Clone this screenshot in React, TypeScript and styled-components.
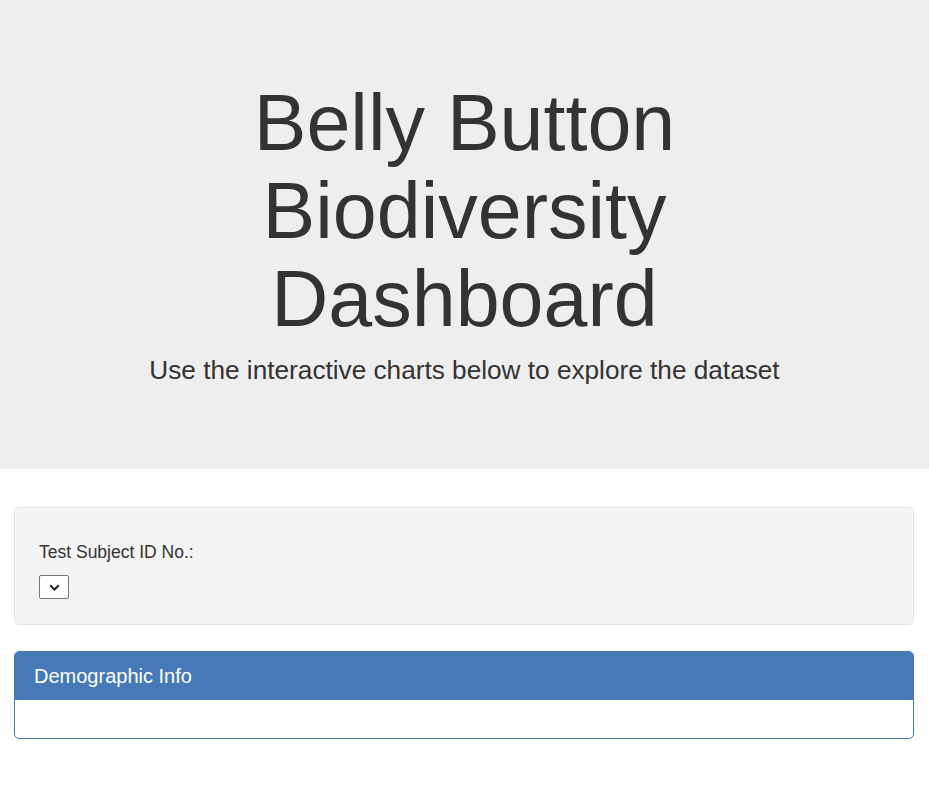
import React from "react";
import styled, { createGlobalStyle } from "styled-components";

const GlobalStyle = createGlobalStyle`
  * { box-sizing: border-box; }
  html, body { margin: 0; padding: 0; background: #fff; }
  body {
    font-family: "Liberation Sans", Arial, Helvetica, sans-serif;
    color: #333;
    font-size: 17.5px;
    line-height: 1.42857;
  }
`;

const Jumbotron = styled.header`
  background: #eeeeee;
  padding: 79px 20px 80px;
  text-align: center;
`;

const Title = styled.h1`
  margin: 0 auto;
  max-width: 520px;
  font-size: 79px;
  font-weight: 400;
  line-height: 88px;
  color: #333;
`;

const Lead = styled.p`
  margin: 9px 0 0;
  font-size: 26.2px;
  font-weight: 400;
  line-height: 37px;
  color: #333;
`;

const Container = styled.main`
  padding: 38px 15px 0 14px;
`;

const Well = styled.section`
  background: #f4f4f4;
  border: 1px solid #e3e3e3;
  border-radius: 5px;
  padding: 32px 24px 25px;
  display: flex;
  flex-direction: column;
  align-items: flex-start;
`;

const Label = styled.label`
  font-size: 17.5px;
  line-height: 25px;
  font-weight: 400;
  color: #333;
  margin-bottom: 10px;
`;

const Select = styled.select`
  appearance: none;
  -webkit-appearance: none;
  width: 30px;
  height: 24px;
  border: 1px solid #767676;
  border-radius: 2px;
  background-color: #fff;
  background-image: url("data:image/svg+xml,%3Csvg xmlns='http://www.w3.org/2000/svg' width='11' height='7' viewBox='0 0 11 7'%3E%3Cpath d='M1.2 1.2l4.3 4.3 4.3-4.3' fill='none' stroke='%23222' stroke-width='2'/%3E%3C/svg%3E");
  background-repeat: no-repeat;
  background-position: center;
  margin: 0;
  padding: 0;
`;

const Panel = styled.section`
  margin-top: 26px;
  border: 1px solid #4679b8;
  border-radius: 5px;
  overflow: hidden;
  background: #fff;
`;

const PanelHeading = styled.div`
  background: #4679b8;
  color: #fff;
  padding: 13px 19px 13px;
`;

const PanelTitle = styled.h3`
  margin: 0;
  font-size: 20px;
  font-weight: 400;
  line-height: 22px;
  color: #fff;
`;

const PanelBody = styled.div`
  padding: 19px;
  min-height: 38px;
`;

export default function App() {
  return (
    <>
      <GlobalStyle />
      <Jumbotron>
        <Title>Belly Button Biodiversity Dashboard</Title>
        <Lead>Use the interactive charts below to explore the dataset</Lead>
      </Jumbotron>
      <Container>
        <Well>
          <Label htmlFor="selDataset">Test Subject ID No.:</Label>
          <Select id="selDataset" />
        </Well>
        <Panel>
          <PanelHeading>
            <PanelTitle>Demographic Info</PanelTitle>
          </PanelHeading>
          <PanelBody />
        </Panel>
      </Container>
    </>
  );
}
